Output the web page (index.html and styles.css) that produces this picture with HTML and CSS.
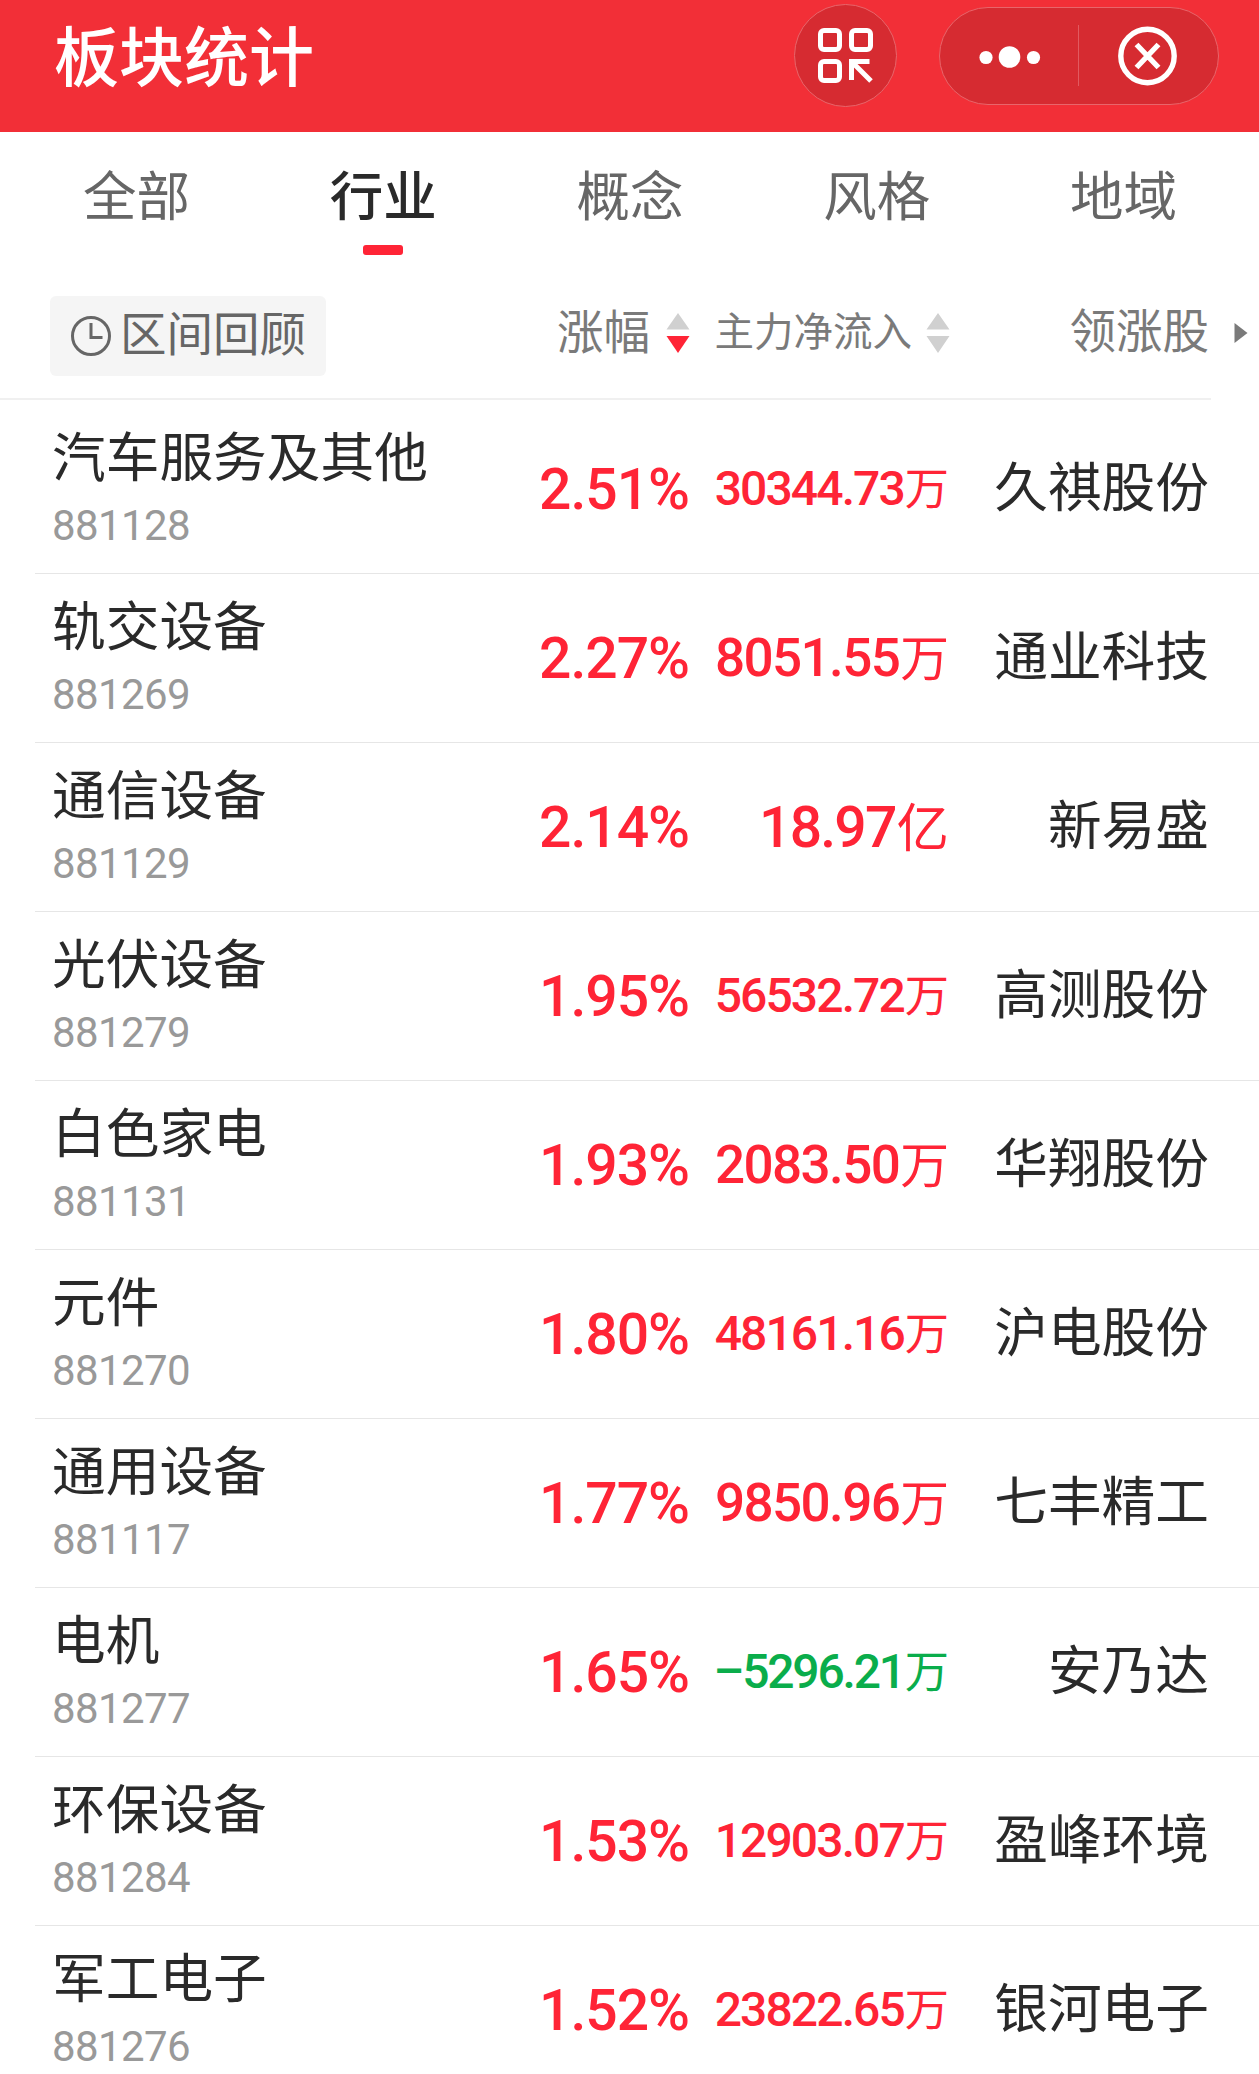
FILE: index.html
```html
<!DOCTYPE html>
<html lang="zh-CN">
<head>
<meta charset="utf-8" />
<title>板块统计</title>
<link rel="stylesheet" href="styles.css">
</head>

<body>
<!--顶部标题栏-->
<div id="header">
   <h1>板块统计</h1>
   <div class="scan">
       <svg width="56" height="56" viewBox="0 0 56 56" fill="none" stroke="#fff" stroke-width="5">
           <rect x="2.5" y="2.5" width="19" height="19" rx="3.5"/>
           <rect x="33.5" y="2.5" width="19" height="19" rx="3.5"/>
           <rect x="2.5" y="33.5" width="19" height="19" rx="3.5"/>
           <path d="M51.5 33.5H33.5V52M34 34L53 53"/>
       </svg>
   </div>
   <div class="capsule">
       <svg class="more" width="62" height="24" viewBox="0 0 62 24" fill="#fff">
           <circle cx="7" cy="13.5" r="6.6"/>
           <circle cx="30.5" cy="13" r="10.8"/>
           <circle cx="54.5" cy="13.5" r="6.6"/>
       </svg>
       <i></i>
       <svg class="close" width="60" height="60" viewBox="0 0 60 60" fill="none" stroke="#fff" stroke-width="5.4">
           <circle cx="29.5" cy="30" r="26.7"/>
           <path d="M18.5 18.5L40.5 41.5M40.5 18.5L18.5 41.5"/>
       </svg>
   </div>
</div>
<!--选项卡-->
<ul id="tabs">
   <li>全部</li>
   <li class="active">行业</li>
   <li>概念</li>
   <li>风格</li>
   <li>地域</li>
</ul>
<!--表头-->
<div id="thead">
   <div class="review">
       <svg width="42" height="42" viewBox="0 0 42 42" fill="none" stroke="#666" stroke-width="3">
           <circle cx="21" cy="21" r="18.5"/>
           <path d="M21 8V22.5H32.5"/>
       </svg>
       <span>区间回顾</span>
   </div>
   <div class="rate"><span>涨幅</span><svg width="24" height="42" viewBox="0 0 24 42"><path fill="#d0d0d0" d="M12 1L23.5 17.5H.5z"/><path fill="#ff2436" d="M12 41L23.5 24H.5z"/></svg></div>
   <div class="flow"><span>主力净流入</span><svg width="24" height="42" viewBox="0 0 24 42"><path fill="#d0d0d0" d="M12 1L23.5 17.5H.5zM12 41L23.5 24H.5z"/></svg></div>
   <div class="stock">领涨股</div>
   <svg class="next" width="14" height="22" viewBox="0 0 14 22"><path fill="#7a7a7a" d="M.5 1L13.5 11L.5 21z"/></svg>
</div>
<!--板块列表-->
<ul id="list">
   <li>
       <div class="name"><h2>汽车服务及其他</h2><p>881128</p></div>
       <div class="rate">2.51%</div>
       <div class="flow small">30344.73<span>万</span></div>
       <div class="stock">久祺股份</div>
   </li>
   <li>
       <div class="name"><h2>轨交设备</h2><p>881269</p></div>
       <div class="rate">2.27%</div>
       <div class="flow mid">8051.55<span>万</span></div>
       <div class="stock">通业科技</div>
   </li>
   <li>
       <div class="name"><h2>通信设备</h2><p>881129</p></div>
       <div class="rate">2.14%</div>
       <div class="flow">18.97<span>亿</span></div>
       <div class="stock">新易盛</div>
   </li>
   <li>
       <div class="name"><h2>光伏设备</h2><p>881279</p></div>
       <div class="rate">1.95%</div>
       <div class="flow small">56532.72<span>万</span></div>
       <div class="stock">高测股份</div>
   </li>
   <li>
       <div class="name"><h2>白色家电</h2><p>881131</p></div>
       <div class="rate">1.93%</div>
       <div class="flow mid">2083.50<span>万</span></div>
       <div class="stock">华翔股份</div>
   </li>
   <li>
       <div class="name"><h2>元件</h2><p>881270</p></div>
       <div class="rate">1.80%</div>
       <div class="flow small">48161.16<span>万</span></div>
       <div class="stock">沪电股份</div>
   </li>
   <li>
       <div class="name"><h2>通用设备</h2><p>881117</p></div>
       <div class="rate">1.77%</div>
       <div class="flow mid">9850.96<span>万</span></div>
       <div class="stock">七丰精工</div>
   </li>
   <li>
       <div class="name"><h2>电机</h2><p>881277</p></div>
       <div class="rate">1.65%</div>
       <div class="flow small down">–5296.21<span>万</span></div>
       <div class="stock">安乃达</div>
   </li>
   <li>
       <div class="name"><h2>环保设备</h2><p>881284</p></div>
       <div class="rate">1.53%</div>
       <div class="flow small">12903.07<span>万</span></div>
       <div class="stock">盈峰环境</div>
   </li>
   <li>
       <div class="name"><h2>军工电子</h2><p>881276</p></div>
       <div class="rate">1.52%</div>
       <div class="flow small">23822.65<span>万</span></div>
       <div class="stock">银河电子</div>
   </li>
</ul>
</body>
</html>
```
FILE: styles.css
```css
/*清除默认样式*/
body,div,ul,p,li,h1,h2{padding:0; margin:0;}
*{box-sizing:border-box;}
li{list-style:none;}
h1,h2{font-weight:normal;}
svg{display:block; flex:none;}
body{height:2074px; overflow:hidden; background:#fff; color:#2a2a2a; font-family:"Noto Sans CJK SC",sans-serif; white-space:nowrap;}

/*标题栏*/
#header{display:flex; height:132px; background:#f22f37; padding-left:54px;}
#header h1{width:740px; height:106px; line-height:106px; font-size:65px; font-weight:500; color:#fff;}
.scan{display:flex; align-items:center; justify-content:center; width:103px; height:103px; margin-top:4px; background:#d62b31; border:1px solid #e8666b; border-radius:50%;}
.capsule{display:flex; align-items:center; width:280px; height:98px; margin:7px 0 0 42px; padding-left:39px; background:#d62b31; border:1px solid #e8666b; border-radius:49px;}
.capsule i{width:1px; height:61px; margin:-2px 39px 0 37px; background:#e15a60;}

/*选项卡*/
#tabs{display:flex; height:146px; padding:0 12px 0 13px;}
#tabs li{flex:1; display:flex; flex-direction:column; align-items:center; line-height:122px; font-size:53.5px; color:#666;}
#tabs .active{font-weight:500; color:#2a2a2a;}
#tabs .active:after{content:""; width:40px; height:10px; margin-top:-9px; border-radius:3px; background:#ff2436;}

/*表头*/
#thead{display:flex; align-items:center; height:122px; padding:0 0 6px 50px; font-size:46.5px; color:#7a7a7a; background:linear-gradient(#f0f0f0,#f0f0f0) 0 100%/1211px 2px no-repeat;}
.review{display:flex; align-items:center; gap:8px; width:276px; height:80px; padding-left:20px; line-height:70px; border-radius:6px; background:#f5f5f5; color:#666;}
.review span{margin-top:-10px;}
#thead .rate{display:flex; align-items:center; justify-content:flex-end; gap:16px; width:364px; line-height:70px; margin-top:-7px;}
#thead .flow{display:flex; align-items:center; justify-content:flex-end; gap:14px; width:260px; line-height:70px; font-size:39.5px; margin-top:-7px;}
#thead .rate span,#thead .flow span{margin-top:-8px;}
#thead .stock{width:259px; line-height:70px; text-align:right; margin-top:-17px;}
#thead .next{margin:-7px 0 0 25px;}

/*列表*/
#list{padding-top:5px;}
#list li{display:flex; align-items:center; height:169px; margin-left:35px; padding-left:17px; border-bottom:1px solid #e6e6e6;}
#list .name{width:400px; height:100%; padding-top:7px;}
#list h2{height:84px; line-height:84px; font-size:53.7px;}
#list p{height:50px; margin-top:5px; line-height:50px; font-family:Roboto,sans-serif; font-size:42px; letter-spacing:-.6px; color:#999;}
#list .rate{width:237px; height:68px; line-height:70px; text-align:right; font-family:Roboto,sans-serif; font-weight:500; font-size:57px; letter-spacing:-1px; color:#ff2436;}
#list .flow{display:flex; align-items:baseline; justify-content:flex-end; width:260px; height:76px; line-height:70px; font-family:Roboto,sans-serif; font-weight:500; font-size:57px; letter-spacing:-1.8px; color:#ff2436;}
#list .flow span{margin-left:1px; font-family:"Noto Sans CJK SC",sans-serif; font-weight:400; font-size:.92em; letter-spacing:0;}
#list .mid{font-size:53px; letter-spacing:-1.6px;}
#list .small{font-size:48px; letter-spacing:-1.9px;}
#list .down{letter-spacing:-2.2px; color:#0aad4b;}
#list .stock{width:260px; height:70px; line-height:60px; text-align:right; font-size:53.7px;}
```
